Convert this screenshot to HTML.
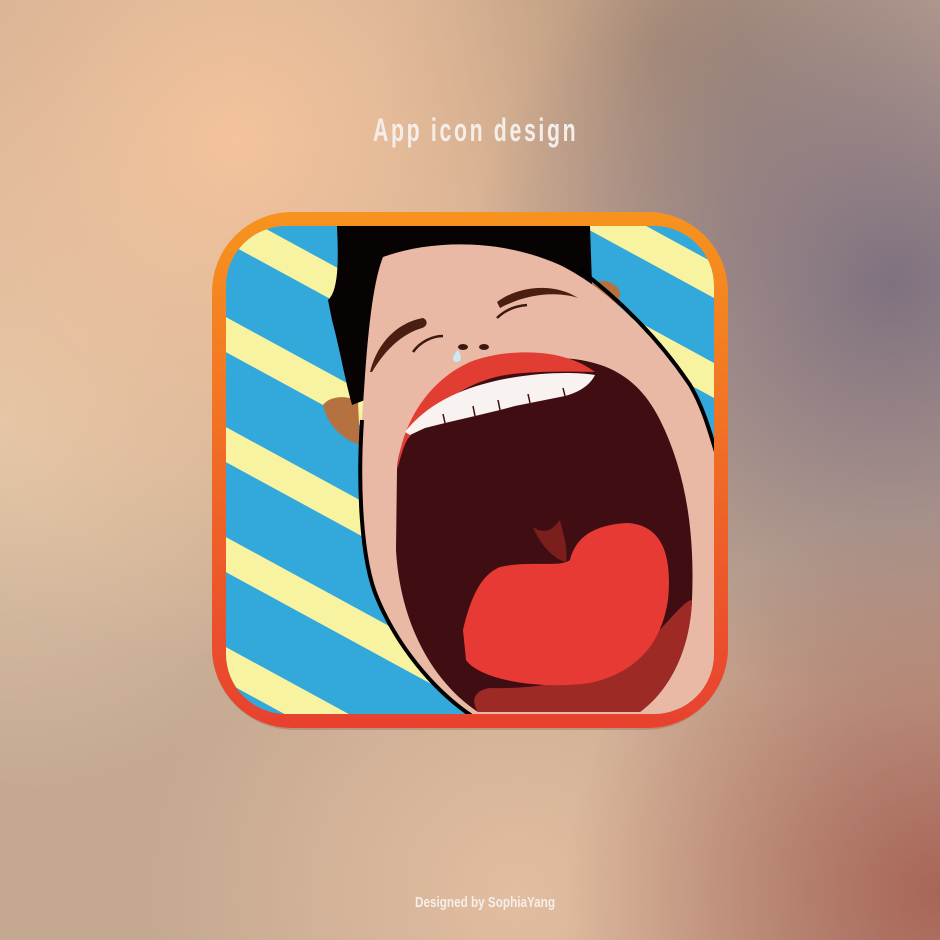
<!DOCTYPE html>
<html><head><meta charset="utf-8"><style>
html,body{margin:0;padding:0;width:940px;height:940px;overflow:hidden}
body{background:#caa88f}
</style></head><body>
<svg width="940" height="940" viewBox="0 0 940 940" xmlns="http://www.w3.org/2000/svg">
<defs>
<radialGradient id="g1" cx="0.25" cy="0.15" r="0.55"><stop offset="0" stop-color="#f3c39c"/><stop offset="1" stop-color="#f3c39c" stop-opacity="0"/></radialGradient>
<radialGradient id="g2" cx="0.95" cy="0.3" r="0.45"><stop offset="0" stop-color="#7f7180"/><stop offset="1" stop-color="#7f7180" stop-opacity="0"/></radialGradient>
<radialGradient id="g3" cx="1" cy="0.95" r="0.4"><stop offset="0" stop-color="#a86558"/><stop offset="1" stop-color="#a86558" stop-opacity="0"/></radialGradient>
<radialGradient id="g4" cx="0.0" cy="0.45" r="0.4"><stop offset="0" stop-color="#e0c7aa"/><stop offset="1" stop-color="#e0c7aa" stop-opacity="0"/></radialGradient>
<radialGradient id="g5" cx="0.55" cy="0.95" r="0.4"><stop offset="0" stop-color="#e2bda0"/><stop offset="1" stop-color="#e2bda0" stop-opacity="0"/></radialGradient>
<radialGradient id="g6" cx="0.7" cy="0.05" r="0.3"><stop offset="0" stop-color="#a08570"/><stop offset="1" stop-color="#a08570" stop-opacity="0"/></radialGradient>
<linearGradient id="bd" x1="0" y1="0" x2="0" y2="1"><stop offset="0" stop-color="#f7931e"/><stop offset="1" stop-color="#e8412f"/></linearGradient>
<clipPath id="ic"><rect x="226" y="226" width="488" height="488" rx="60"/></clipPath>
</defs>
<rect width="940" height="940" fill="#c4a891"/>
<rect width="940" height="940" fill="url(#g4)"/>
<rect width="940" height="940" fill="url(#g5)"/>
<rect width="940" height="940" fill="url(#g6)"/>
<rect width="940" height="940" fill="url(#g1)"/>
<rect width="940" height="940" fill="url(#g2)"/>
<rect width="940" height="940" fill="url(#g3)"/>

<g transform="translate(373,141) scale(0.665,1)">
<text x="0" y="0" letter-spacing="4" font-family="Liberation Sans, sans-serif" font-size="32" font-weight="bold" fill="#f4eeea">App icon design</text>
</g>

<rect x="212" y="214" width="516" height="516" rx="82" fill="#7a4030" opacity="0.25"/>
<rect x="212" y="212" width="516" height="516" rx="80" fill="url(#bd)"/>
<g clip-path="url(#ic)">
<rect x="226" y="226" width="488" height="488" fill="#33a8db"/>
<g fill="#f8f3a0">
<polygon points="200,-17 760,288 760,323 200,18"/>
<polygon points="200,83 760,388 760,423 200,118"/>
<polygon points="200,193 760,498 760,533 200,228"/>
<polygon points="200,303 760,608 760,643 200,338"/>
<polygon points="200,413 760,718 760,753 200,448"/>
<polygon points="200,523 760,828 760,863 200,558"/>
<polygon points="200,633 760,938 760,973 200,668"/>
</g>
<path d="M323,405 C330,395 350,395 358,402 L360,445 C345,440 328,428 323,405Z" fill="#b5713f"/>
<path d="M590,285 C600,278 615,280 620,292 L618,312 L595,300Z" fill="#b5713f"/>
<path d="M337,226 L590,226 L592,285 L582,290 L380,300 L365,400 L352,405 C345,380 340,350 332,320 L328,300 C340,290 338,250 337,226Z" fill="#080303"/>
<path d="M383,257 C430,240 500,238 560,265 C600,285 640,320 690,385 C705,410 712,440 720,463 L720,720 L475,720 C420,680 395,640 378,600 C360,560 358,480 362,420 C366,360 370,290 383,257Z" fill="#e9b9a6"/>
<path d="M362,420 C358,480 360,560 378,600 C395,640 430,690 478,720" fill="none" stroke="#000" stroke-width="4"/>
<path d="M580,270 C620,300 660,340 690,385 C705,410 712,440 720,465" fill="none" stroke="#000" stroke-width="4"/>
<path d="M370,372 C378,340 400,322 423,318 C428,320 428,326 422,328 C402,334 385,350 372,372Z" fill="#4a1e10"/>
<path d="M497,302 C520,285 555,283 578,298 C560,292 530,292 500,308Z" fill="#4a1e10"/>
<path d="M413,352 C420,342 432,336 443,336" fill="none" stroke="#3a1a10" stroke-width="2.5"/>
<path d="M497,318 C505,310 515,306 527,305" fill="none" stroke="#3a1a10" stroke-width="2.5"/>
<ellipse cx="463" cy="347" rx="5" ry="3" fill="#3a1a10"/>
<ellipse cx="484" cy="347" rx="5" ry="3" fill="#3a1a10"/>
<path d="M458,350 C462,356 462,362 456,362 C451,361 453,355 458,350Z" fill="#c8ecf5"/>
<path d="M397,470 C400,410 470,360 560,358 C610,360 640,380 660,420 C685,470 695,530 692,600 C690,650 670,690 640,712 L478,712 C430,680 400,620 396,550Z" fill="#3f0d12"/>
<path d="M692,600 C690,650 670,690 640,712 L478,712 C470,700 475,690 490,688 C560,690 620,670 650,640 C670,620 685,600 692,600Z" fill="#9e2a26"/>
<path d="M463,630 C470,600 480,575 500,567 C530,560 560,568 570,560 C575,540 590,525 627,523 C665,525 672,560 668,600 C662,640 640,672 590,683 C540,690 480,680 466,660Z" fill="#e83a34"/>
<path d="M533,527 C545,535 552,530 560,520 C565,540 568,550 566,562 C555,560 540,545 533,527Z" fill="#7a1f1c"/>
<path d="M397,470 C402,420 430,380 470,362 C500,350 560,345 595,372 C580,372 530,370 500,376 C460,385 430,410 407,440 C402,450 400,460 397,470Z" fill="#e13d33"/>
<path d="M405,432 C430,400 470,385 510,378 C545,372 575,372 595,375 C590,385 580,392 565,396 L545,400 L530,403 L515,406 L500,410 L475,416 L445,423 L425,428 L410,435Z" fill="#f8f2f0"/>
<g stroke="#3f0d12" stroke-width="1.5"><line x1="445" y1="423" x2="443" y2="414"/><line x1="475" y1="416" x2="473" y2="406"/><line x1="500" y1="410" x2="498" y2="400"/><line x1="530" y1="403" x2="528" y2="394"/><line x1="565" y1="396" x2="563" y2="388"/></g>
</g>

<text x="485" y="907" text-anchor="middle" textLength="140" lengthAdjust="spacingAndGlyphs" font-family="Liberation Sans Narrow, Liberation Sans, sans-serif" font-size="15" font-weight="bold" fill="#f6eee8">Designed by SophiaYang</text>
</svg>
</body></html>
